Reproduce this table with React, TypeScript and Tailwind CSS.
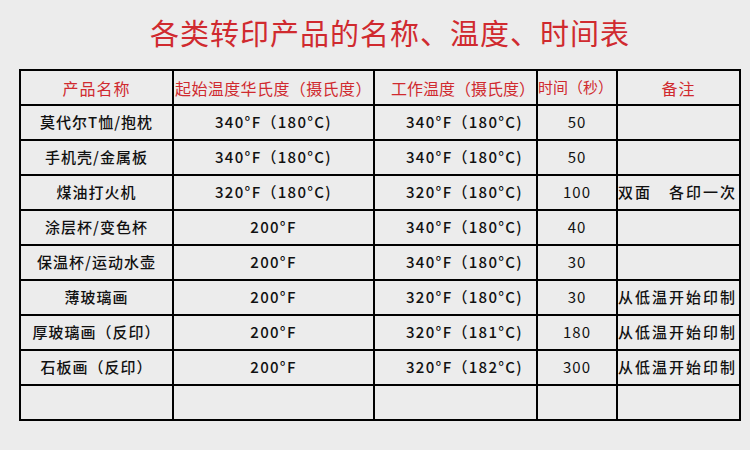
const rows: [string, string, string, string, string][] = [
  ["莫代尔T恤/抱枕", "340°F（180°C)", "340°F（180°C)", "50", ""],
  ["手机壳/金属板", "340°F（180°C)", "340°F（180°C)", "50", ""],
  ["煤油打火机", "320°F（180°C)", "320°F（180°C)", "100", "双面　各印一次"],
  ["涂层杯/变色杯", "200°F", "340°F（180°C)", "40", ""],
  ["保温杯/运动水壶", "200°F", "340°F（180°C)", "30", ""],
  ["薄玻璃画", "200°F", "320°F（180°C)", "30", "从低温开始印制"],
  ["厚玻璃画（反印）", "200°F", "320°F（181°C)", "180", "从低温开始印制"],
  ["石板画（反印）", "200°F", "320°F（182°C)", "300", "从低温开始印制"],
  ["", "", "", "", ""],
];

const headers = ["产品名称", "起始温度华氏度（摄氏度）", "工作温度（摄氏度）", "时间（秒）", "备注"];

export default function App() {
  return (
    <div
      className="w-[750px] h-[450px] bg-[#ececec] overflow-hidden"
      style={{ fontFamily: '"Noto Sans CJK SC", "Noto Sans", sans-serif' }}
    >
      {/* title sits a little right of centre in the original */}
      <div className="h-[69px] pt-[12px] pl-[30px] text-center text-[29px] leading-[40px] text-[#d02a2f] tracking-[1px]">
        各类转印产品的名称、温度、时间表
      </div>
      <table className="ml-[19px] border-collapse table-fixed text-[15px] font-medium text-[#111]">
        <colgroup>
          <col className="w-[153px]" />
          <col className="w-[201px]" />
          <col className="w-[163px]" />
          <col className="w-[80px]" />
          <col className="w-[123px]" />
        </colgroup>
        <thead>
          <tr className="h-[35px]">
            {headers.map((h, i) => (
              <th
                key={i}
                className={`border-2 border-black p-0 font-normal text-[#d02a2f] whitespace-nowrap ${
                  i === 1 || i === 3 ? "text-left" : "text-center"
                } ${i === 3 ? "text-[15px]" : "text-[16px]"} ${i === 0 || i === 4 ? "tracking-[1px]" : ""} ${
                  i === 1 ? "pl-[1px] tracking-[0.4px]" : ""
                } ${i === 2 ? "pl-[16px] text-left" : ""}`}
              >
                {h}
              </th>
            ))}
          </tr>
        </thead>
        <tbody>
          {rows.map((r, ri) => (
            <tr key={ri} className="h-[35px]">
              {r.map((c, ci) => (
                <td
                  key={ci}
                  className={`border-2 border-black p-0 whitespace-nowrap ${
                    ci === 4 ? "text-left tracking-[2px]" : "text-center"
                  } ${ci === 0 ? "tracking-[1px]" : ""} ${ci === 2 ? "pl-[18px]" : ""} ${
                    ci === 1 || ci === 2 ? "tracking-[1.3px]" : ""
                  } ${ci === 3 ? "font-normal tracking-[1px]" : ""}`}
                >
                  {c}
                </td>
              ))}
            </tr>
          ))}
        </tbody>
      </table>
    </div>
  );
}
